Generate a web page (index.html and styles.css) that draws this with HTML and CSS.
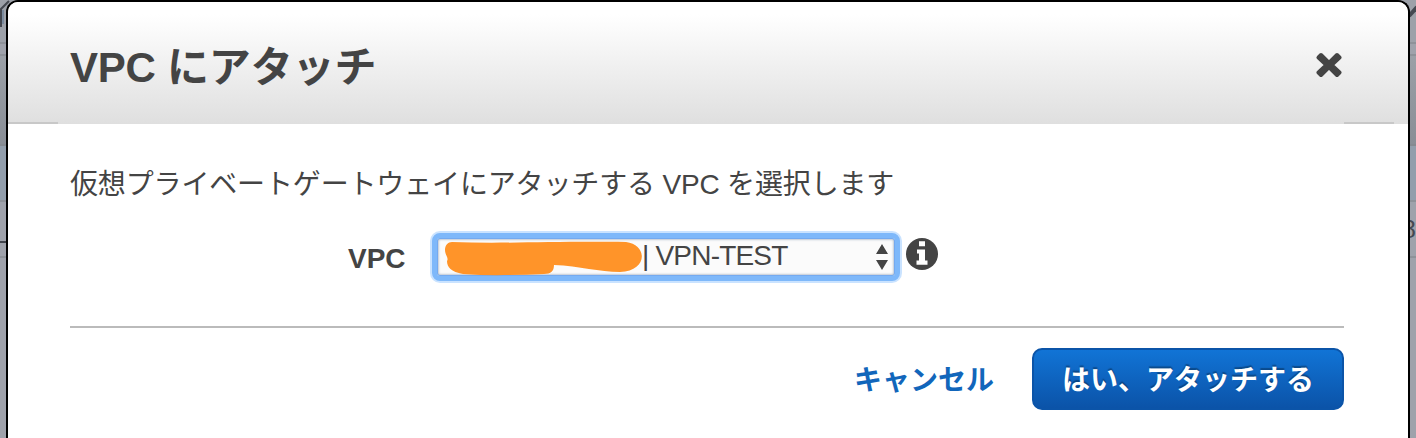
FILE: index.html
```html
<!DOCTYPE html>
<html lang="ja">
<head>
<meta charset="utf-8">
<title>VPC にアタッチ</title>
<link rel="stylesheet" href="styles.css">
</head>
<body>
<div class="backdrop">
  <div class="row row-top"></div>
  <div class="row row-gap"></div>
  <div class="row row-head"></div>
  <div class="row row-selected"></div>
  <div class="row row-item"></div>
  <div class="row row-rest"></div>
  <svg class="scraps" width="1416" height="438" viewBox="0 0 1416 438">
    <path d="M9 1L1 9V27" fill="none" stroke="#44474f" stroke-width="2"/>
    <path d="M3 10V24" stroke="#587493" stroke-width="1"/>
    <path d="M0 242H6" stroke="#41444c" stroke-width="2"/>
    <path d="M1409 16L1417 7" stroke="#454951" stroke-width="4"/>
    <text class="scrap-text" x="1402" y="238">8</text>
  </svg>
</div>
<main class="dialog">
  <header class="dialog-header">
    <h1 class="title"><span class="title-latin">VPC</span> にアタッチ</h1>
    <svg class="close" width="26" height="26" viewBox="0 0 26 26"><path d="M5 3L13 11L21 3L23.5 5.5L15.500 13L23.500 20.500L21 23L13 15L5 23L2.500 20.500L10.500 13L2.500 5.500Z" fill="#444" stroke="#444" stroke-width="4" stroke-linejoin="round"/></svg>
  </header>
  <section class="dialog-body">
    <p class="lead">仮想プライベートゲートウェイにアタッチする <span class="lead-latin">VPC</span> を選択します</p>
    <div class="field">
      <label class="label">VPC</label>
      <div class="select">
        <svg class="redaction" width="200" height="36" viewBox="0 0 200 36"><path d="M10 2C60 4 110 1 184 2C206 5 206 31 178 32C157 32 138 26 112 25C112 31 109 34 102 34C75 35 48 36 21 34C9 32 5 27 5 21C7 18 3 15 3 10C3 5 6 2 10 2Z" fill="#ff9429"/></svg>
        <span class="value">| VPN-TEST</span>
        <svg class="arrows" width="14" height="28" viewBox="0 0 14 28"><path d="M7 1L13 11H1ZM1 17H13L7 27Z" fill="#444"/></svg>
      </div>
      <svg class="info" width="32" height="32" viewBox="0 0 32 32"><circle cx="16" cy="16" r="16" fill="#444"/><path d="M13 3.300H19V8.300H13ZM11 11.500H19V22.500H21.500V26.700H10.500V22.500H13V15.500H11Z" fill="#fff"/></svg>
    </div>
    <footer class="actions">
      <a class="cancel">キャンセル</a>
      <button class="submit">はい、アタッチする</button>
    </footer>
  </section>
</main>
</body>
</html>
```
FILE: styles.css
```css
* { box-sizing: border-box; }
body {
  margin: 0;
  width: 1416px;
  height: 438px;
  overflow: hidden;
  position: relative;
  color: #444;
  font-family: "Liberation Sans", "Noto Sans CJK JP", sans-serif;
  font-size: 28px;
}
.backdrop {
  position: absolute;
  inset: 0;
  display: grid;
  grid-template-rows: 44px 12px 90px 56px 56px 180px;
  background: #9fa2ab;
}
.row { border-bottom: 2px solid #8e9299; }
.row-top { background: #9da1a9; }
.row-head { background: linear-gradient(#9ba0a7, #898e96); border-color: #858a91; }
.row-selected { background: #929eac; }
.row-rest { border: 0; }
.scraps { position: absolute; inset: 0; }
.scrap-text { font-size: 25px; fill: #454951; }
.dialog {
  position: relative;
  width: 1404px;
  height: 438px;
  margin-left: 6px;
  border: 2px solid #000;
  border-bottom: 0;
  border-radius: 12px 12px 0 0;
  background: #fff;
  overflow: hidden;
}
.dialog-header {
  height: 122px;
  padding: 0 66px 0 62px;
  display: flex;
  justify-content: space-between;
  background:
    linear-gradient(#c8c8c8, #c8c8c8) 0 100% / 50px 2px no-repeat,
    linear-gradient(#c8c8c8, #c8c8c8) 1336px 100% / 50px 2px no-repeat,
    linear-gradient(#fff, #fff 10%, #dfdfdf);
}
.title { margin: 36px 0 0; font-size: 42px; line-height: 60px; white-space: nowrap; letter-spacing: -0.15px; }
.title-latin { letter-spacing: -0.3px; }
.close { margin-top: 50px; }
.dialog-body { padding: 0 64px 0 62px; }
.lead { margin: 41px 0 0; height: 40px; line-height: 40px; white-space: nowrap; letter-spacing: -0.15px; }
.lead-latin { letter-spacing: -0.2px; }
.field { display: flex; height: 52px; margin-top: 26px; padding-left: 278px; }
.label { width: 84px; line-height: 55px; font-weight: bold; }
.select {
  width: 468px;
  height: 48px;
  margin-top: 2px;
  padding: 1px 7px 0 5px;
  display: flex;
  background: #fbfbfb;
  border: 5px solid #7eb8fa;
  border-radius: 8px;
  box-shadow: 0 0 0 2px #cae3ff, inset 0 0 0 1px #74aaf0, inset 0 0 2px 2px #bfc8d4;
}
.redaction { flex: none; margin-top: 1px; }
.value { line-height: 34px; white-space: nowrap; letter-spacing: -0.8px; }
.arrows { margin: 4px -1px 0 auto; }
.info { margin: 7px 0 0 6px; }
.actions {
  height: 84px;
  margin-top: 43px;
  padding-top: 20px;
  border-top: 2px solid #bbb;
  display: flex;
  justify-content: flex-end;
  gap: 38px;
}
.cancel { color: #1166bb; font-weight: bold; line-height: 65px; }
.submit {
  width: 312px;
  height: 62px;
  padding: 0 0 2px;
  border: 2px solid #0b54a8;
  border-radius: 10px;
  background: linear-gradient(#1174d6, #0b53a8);
  color: #fff;
  font: bold 28px "Liberation Sans", "Noto Sans CJK JP", sans-serif;
  text-shadow: 0 -2px 1px rgba(0, 0, 0, .3);
  white-space: nowrap;
}
```
